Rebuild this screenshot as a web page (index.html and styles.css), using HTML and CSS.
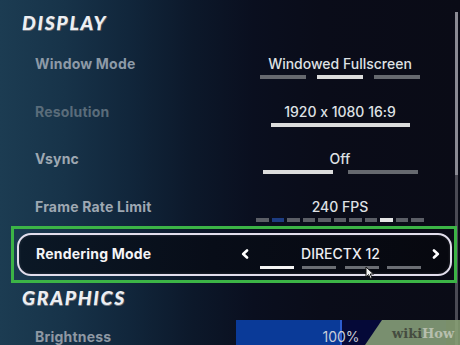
FILE: index.html
```html
<!DOCTYPE html>
<html lang="en">
<head>
<meta charset="utf-8">
<title>Display settings</title>
<link rel="stylesheet" href="styles.css">
</head>
<body>
<main class="screen">
  <h2 class="section section-display">DISPLAY</h2>

  <div class="setting">
    <span class="label">Window Mode</span>
    <div class="value">
      <span class="value-text">Windowed Fullscreen</span>
      <div class="bars bars-window"><i></i><i class="on"></i><i></i></div>
    </div>
  </div>

  <div class="setting">
    <span class="label label-disabled">Resolution</span>
    <div class="value">
      <span class="value-text">1920 x 1080 16:9</span>
      <div class="bars bars-res"><i class="on"></i></div>
    </div>
  </div>

  <div class="setting">
    <span class="label label-light">Vsync</span>
    <div class="value">
      <span class="value-text">Off</span>
      <div class="bars bars-vsync"><i class="on"></i><i></i></div>
    </div>
  </div>

  <div class="setting setting-short">
    <span class="label label-light">Frame Rate Limit</span>
    <div class="value">
      <span class="value-text">240 FPS</span>
      <div class="bars bars-fps"><i></i><i class="blue"></i><i></i><i></i><i></i><i></i><i></i><i></i><i class="on"></i><i></i><i></i></div>
    </div>
  </div>

  <div class="focus">
    <div class="active">
      <span class="label label-white">Rendering Mode</span>
      <div class="picker">
        <svg class="chev" width="8" height="10" viewBox="0 0 8 10"><polyline points="6,1.5 2.2,5 6,8.5" fill="none" stroke="#fff" stroke-width="2.6" stroke-linecap="round" stroke-linejoin="round"/></svg>
        <div class="value value-picker">
          <span class="value-text value-caps">DIRECTX 12</span>
          <div class="bars bars-render"><i class="on"></i><i></i><i></i><i></i></div>
        </div>
        <svg class="chev" width="8" height="10" viewBox="0 0 8 10"><polyline points="2,1.5 5.8,5 2,8.5" fill="none" stroke="#fff" stroke-width="2.6" stroke-linecap="round" stroke-linejoin="round"/></svg>
      </div>
    </div>
  </div>

  <h2 class="section section-graphics">GRAPHICS</h2>

  <div class="setting setting-slider">
    <span class="label label-bright">Brightness</span>
    <div class="slider"><span>100%</span></div>
  </div>

  <div class="scrollbar"></div>
  <svg class="cursor" width="10" height="14" viewBox="0 0 10 14"><path d="M1 1 L1 11 L3.6 8.6 L5.4 12.6 L7 11.9 L5.3 8 L8.6 8 Z" fill="#f2f2f2" stroke="#111" stroke-width="1"/></svg>
  <div class="watermark"><span class="wm-wiki">wiki</span><span class="wm-how">How</span></div>
</main>
</body>
</html>
```

FILE: styles.css
```css
* { box-sizing: border-box; }

html, body {
  margin: 0;
  padding: 0;
}

body {
  width: 460px;
  height: 345px;
  overflow: hidden;
  background: #0a0b16;
}

.screen {
  position: relative;
  width: 460px;
  height: 345px;
  overflow: hidden;
  background: linear-gradient(to right, #1c3c52 0%, #173349 14%, #11263b 28%, #0c182a 42%, #0a0f1f 55%, #0a0c19 70%, #0a0b16 100%);
  font-family: Inter, "Noto Sans", "DejaVu Sans", sans-serif;
  font-feature-settings: "calt" 0;
}

.section {
  margin: 0;
  padding-left: 22px;
  font-family: Lato, "DejaVu Sans", sans-serif;
  font-weight: 900;
  font-style: italic;
  font-size: 19.5px;
  letter-spacing: 1.6px;
  color: #eceef2;
  text-shadow: 0 1px 0 #6e7680, 1px 1px 0 #3c444e;
}

.section-display {
  height: 40px;
  padding-top: 5px;
  line-height: 35px;
}

.section-graphics {
  height: 37px;
  padding-top: 0;
  line-height: 30px;
}

.setting {
  display: grid;
  grid-template-columns: 220px 170px;
  align-items: start;
  height: 47.5px;
  padding-left: 35px;
  padding-top: 16px;
}

.setting-short {
  height: 43.5px;
}

.label {
  font-size: 14px;
  font-weight: 700;
  line-height: 16px;
  letter-spacing: 0.2px;
  color: #8d9aa7;
  white-space: nowrap;
}

.label-disabled { color: #5a6c7a; }
.label-light { color: #9ea8b2; }
.label-white { color: #f4f4f6; }
.label-bright { color: #8e98a3; }

.value {
  display: flex;
  flex-direction: column;
  align-items: center;
}

.value-text {
  font-size: 14px;
  font-weight: 500;
  line-height: 16px;
  color: #dfe1e4;
  white-space: nowrap;
}

.value-caps {
  color: #eeeef2;
}

.bars {
  display: flex;
  margin-top: 3px;
}

.bars i {
  display: block;
  height: 4px;
  background: #66696f;
}

.bars i.on { background: #dcdcdc; }
.bars i.blue { background: #1d3c82; }

.bars-window { gap: 11px; }
.bars-window i { width: 46px; }

.bars-res i { width: 139px; }

.bars-vsync { gap: 15px; margin-left: 1px; }
.bars-vsync i { width: 70px; }

.bars-fps { gap: 3px; margin-top: 3px; }
.bars-fps i { width: 12.5px; background: #5b5e66; }
.bars-fps i.on { background: #e4e4e4; }
.bars-fps i.blue { background: #1d3c82; }

.focus {
  position: relative;
  z-index: 2;
  width: 446px;
  height: 57px;
  margin-left: 11px;
  border: 3px solid #3cb446;
  padding: 4px 2px 4px 3px;
}

.active {
  display: flex;
  align-items: flex-start;
  height: 43px;
  border: 2px solid #e2deec;
  border-radius: 14px;
  padding: 11px 0 0 17px;
  background: linear-gradient(to right, #0b1826 0%, #080d18 45%, #07080f 100%);
  box-shadow: inset 0 0 3px rgba(255, 255, 255, 0.15);
}

.active .label {
  width: 205px;
}

.picker {
  display: flex;
  align-items: flex-start;
  width: 199px;
}

.chev {
  display: block;
  margin-top: 3px;
  flex: none;
}

.value-picker {
  flex: 1;
}

.bars-render { gap: 8.5px; margin-top: 3.5px; }
.bars-render i { width: 34px; height: 3.5px; background: #6b6e74; }
.bars-render i.on { background: #f4f4f4; }

.setting-slider {
  grid-template-columns: 201px 210px;
  height: 25px;
  padding-top: 0;
}

.setting-slider .label {
  padding-top: 9px;
}

.slider {
  display: flex;
  align-items: center;
  justify-content: center;
  height: 28px;
  padding-top: 5px;
  font-size: 14px;
  color: #c9cdd8;
  background: linear-gradient(to right, #0a3a98 0 104px, #2c5cd0 104px 106px, #050938 106px);
}

.scrollbar {
  position: absolute;
  left: 455px;
  top: 12px;
  width: 3px;
  height: 333px;
  z-index: 1;
  background: linear-gradient(#8a8a93 0 163px, #4a4a54 163px);
}

.cursor {
  position: absolute;
  left: 365px;
  top: 266px;
  z-index: 3;
}

.watermark {
  position: absolute;
  right: 0;
  bottom: 0;
  z-index: 4;
  width: 95px;
  height: 25px;
  padding: 5px 0 0 27px;
  clip-path: polygon(17px 0, 100% 0, 100% 100%, 0 100%);
  background: rgba(138, 162, 118, 0.88);
  font-family: "DejaVu Serif", "Liberation Serif", serif;
  font-weight: 700;
  font-size: 13px;
  line-height: 17px;
  white-space: nowrap;
}

.wm-wiki { color: #454c40; }
.wm-how { color: #b7bfae; }
```
